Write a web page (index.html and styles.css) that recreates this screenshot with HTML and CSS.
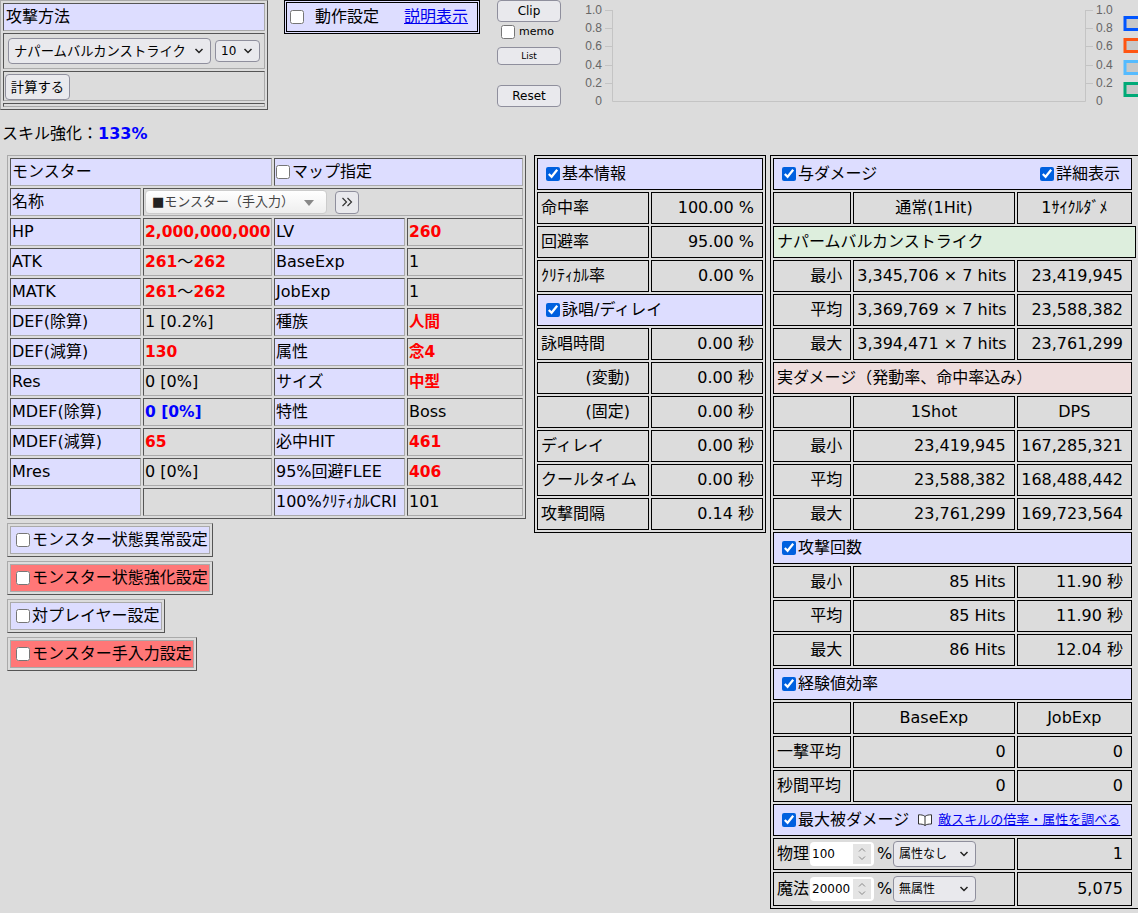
FILE: index.html
```html
<!DOCTYPE html>
<html lang="ja">

<head>
  <meta charset="UTF-8" />
  <title>ダメージ計算</title>
  <link rel="stylesheet" href="styles.css">
</head>

<body>

  <div class="top">
    <table class="outset attack">
      <tr><td class="head">攻撃方法</td></tr>
      <tr>
        <td class="select-row">
          <div class="select-flex">
            <select class="skill-select"><option>ナパームバルカンストライク</option></select>
            <select class="level-select"><option>10</option></select>
          </div>
        </td>
      </tr>
      <tr><td class="button-row"><button class="calc">計算する</button></td></tr>
      <tr><td class="empty-row"></td></tr>
    </table>

    <div class="settings">
      <input type="checkbox" />
      <span class="settings-label">動作設定</span>
      <a href="#">説明表示</a>
    </div>

    <div class="tools">
      <button class="clip">Clip</button>
      <label class="memo"><input type="checkbox" />memo</label>
      <button class="list">List</button>
      <button class="reset">Reset</button>
    </div>

    <svg class="chart" width="553" height="112" viewBox="0 0 553 112">
      <g class="axis">
        <path d="M27.5 10V101.5H500.5V10" />
        <path d="M20 10.5H27M20 28.5H27M20 46.5H27M20 65.5H27M20 83.5H27" />
        <path d="M501 10.5H508M501 28.5H508M501 46.5H508M501 65.5H508M501 83.5H508" />
      </g>
      <g class="tick" text-anchor="end">
        <text x="17" y="14">1.0</text><text x="17" y="32">0.8</text><text x="17" y="50">0.6</text>
        <text x="17" y="69">0.4</text><text x="17" y="87">0.2</text><text x="17" y="105">0</text>
      </g>
      <g class="tick">
        <text x="511" y="14">1.0</text><text x="511" y="32">0.8</text><text x="511" y="50">0.6</text>
        <text x="511" y="69">0.4</text><text x="511" y="87">0.2</text><text x="511" y="105">0</text>
      </g>
      <rect class="lg" x="540" y="17.5" width="30" height="12" stroke="#0055ff" />
      <rect class="lg" x="540" y="39.5" width="30" height="12" stroke="#ff5511" />
      <rect class="lg" x="540" y="61.5" width="30" height="12" stroke="#55bbff" />
      <rect class="lg" x="540" y="83.5" width="30" height="12" stroke="#00aa77" />
    </svg>
  </div>

  <p class="skill-up">スキル強化：<b>133%</b></p>

  <div class="main">
    <div class="monster-col">
      <table class="outset monster">
        <colgroup><col class="c1"><col class="c2"><col class="c3"><col class="c4"></colgroup>
        <tr><td class="head" colspan="2">モンスター</td><td class="head" colspan="2"><input type="checkbox" />マップ指定</td></tr>
        <tr>
          <td class="head">名称</td>
          <td colspan="3">
            <div class="picker">
              <div class="picker-box"><span class="picker-mark">■</span>モンスター（手入力）<i class="caret"></i></div>
              <button class="more">
                <svg width="12" height="10" viewBox="0 0 12 10"><path d="M1.5 1l4 4-4 4M6.5 1l4 4-4 4" /></svg>
              </button>
            </div>
          </td>
        </tr>
        <tr><td class="head">HP</td><td class="red">2,000,000,000</td><td class="head">LV</td><td class="red">260</td></tr>
        <tr><td class="head">ATK</td><td><span class="red">261</span>～<span class="red">262</span></td><td class="head">BaseExp</td><td>1</td></tr>
        <tr><td class="head">MATK</td><td><span class="red">261</span>～<span class="red">262</span></td><td class="head">JobExp</td><td>1</td></tr>
        <tr><td class="head">DEF(除算)</td><td>1 [0.2%]</td><td class="head">種族</td><td class="red">人間</td></tr>
        <tr><td class="head">DEF(減算)</td><td class="red">130</td><td class="head">属性</td><td class="red">念4</td></tr>
        <tr><td class="head">Res</td><td>0 [0%]</td><td class="head">サイズ</td><td class="red">中型</td></tr>
        <tr><td class="head">MDEF(除算)</td><td class="blue">0 [0%]</td><td class="head">特性</td><td>Boss</td></tr>
        <tr><td class="head">MDEF(減算)</td><td class="red">65</td><td class="head">必中HIT</td><td class="red">461</td></tr>
        <tr><td class="head">Mres</td><td>0 [0%]</td><td class="head">95%回避FLEE</td><td class="red">406</td></tr>
        <tr><td class="head"></td><td></td><td class="head">100%ｸﾘﾃｨｶﾙCRI</td><td>101</td></tr>
      </table>

      <div class="status"><label class="status-in"><input type="checkbox" />モンスター状態異常設定</label></div>
      <div class="status"><label class="status-in warn"><input type="checkbox" />モンスター状態強化設定</label></div>
      <div class="status"><label class="status-in"><input type="checkbox" />対プレイヤー設定</label></div>
      <div class="status"><label class="status-in warn"><input type="checkbox" />モンスター手入力設定</label></div>
    </div>

    <table class="solid info">
      <colgroup><col class="i1"><col class="i2"></colgroup>
      <tr><td class="head title" colspan="2"><input type="checkbox" checked />基本情報</td></tr>
      <tr><td>命中率</td><td class="num">100.00 %</td></tr>
      <tr><td>回避率</td><td class="num">95.00 %</td></tr>
      <tr><td>ｸﾘﾃｨｶﾙ率</td><td class="num">0.00 %</td></tr>
      <tr><td class="head title" colspan="2"><input type="checkbox" checked />詠唱/ディレイ</td></tr>
      <tr><td>詠唱時間</td><td class="num">0.00 秒</td></tr>
      <tr><td class="sub">(変動)</td><td class="num">0.00 秒</td></tr>
      <tr><td class="sub">(固定)</td><td class="num">0.00 秒</td></tr>
      <tr><td>ディレイ</td><td class="num">0.00 秒</td></tr>
      <tr><td>クールタイム</td><td class="num">0.00 秒</td></tr>
      <tr><td>攻撃間隔</td><td class="num">0.14 秒</td></tr>
    </table>

    <table class="solid damage">
      <colgroup><col class="d1"><col class="d2"><col class="d3"><col class="d4"></colgroup>
      <tr>
        <td class="head title" colspan="3">
          <div class="title-split">
            <span><input type="checkbox" checked />与ダメージ</span>
            <span><input type="checkbox" checked />詳細表示</span>
          </div>
        </td>
      </tr>
      <tr><td></td><td class="mid">通常(1Hit)</td><td class="mid">1ｻｲｸﾙﾀﾞﾒ</td></tr>
      <tr><td class="skill-name" colspan="4">ナパームバルカンストライク</td></tr>
      <tr><td class="num">最小</td><td class="num">3,345,706 × 7 hits</td><td class="num">23,419,945</td></tr>
      <tr><td class="num">平均</td><td class="num">3,369,769 × 7 hits</td><td class="num">23,588,382</td></tr>
      <tr><td class="num">最大</td><td class="num">3,394,471 × 7 hits</td><td class="num">23,761,299</td></tr>
      <tr><td class="real" colspan="3">実ダメージ（発動率、命中率込み）</td></tr>
      <tr><td></td><td class="mid">1Shot</td><td class="mid">DPS</td></tr>
      <tr><td class="num">最小</td><td class="num">23,419,945</td><td class="num">167,285,321</td></tr>
      <tr><td class="num">平均</td><td class="num">23,588,382</td><td class="num">168,488,442</td></tr>
      <tr><td class="num">最大</td><td class="num">23,761,299</td><td class="num">169,723,564</td></tr>
      <tr><td class="head title" colspan="3"><input type="checkbox" checked />攻撃回数</td></tr>
      <tr><td class="num">最小</td><td class="num">85 Hits</td><td class="num">11.90 秒</td></tr>
      <tr><td class="num">平均</td><td class="num">85 Hits</td><td class="num">11.90 秒</td></tr>
      <tr><td class="num">最大</td><td class="num">86 Hits</td><td class="num">12.04 秒</td></tr>
      <tr><td class="head title" colspan="3"><input type="checkbox" checked />経験値効率</td></tr>
      <tr><td></td><td class="mid">BaseExp</td><td class="mid">JobExp</td></tr>
      <tr><td>一撃平均</td><td class="num">0</td><td class="num">0</td></tr>
      <tr><td>秒間平均</td><td class="num">0</td><td class="num">0</td></tr>
      <tr>
        <td class="head title" colspan="3">
          <div class="title-link">
            <span><input type="checkbox" checked />最大被ダメージ</span>
            <a class="enemy-link" href="#">
              <svg class="book" width="16" height="12" viewBox="0 0 16 12">
                <path d="M8 2.5C6.5 1 4 .8 1.5.8V10c2.500 0 5 .2 6.500 1.500 1.500-1.300 4-1.500 6.500-1.500V.8C12 .8 9.500 1 8 2.500zM8 2.500v9" />
              </svg>
              敵スキルの倍率・属性を調べる
            </a>
          </div>
        </td>
      </tr>
      <tr>
        <td colspan="2">
          <div class="taken">
            物理
            <span class="pct"><input type="text" value="100" /><span class="spin"><svg width="10" height="16" viewBox="0 0 10 16"><path d="M2 5.500l3-3 3 3M2 10.500l3 3 3-3" /></svg></span></span>
            <span class="pct-mark">%</span>
            <select class="elem"><option>属性なし</option></select>
          </div>
        </td>
        <td class="num">1</td>
      </tr>
      <tr class="last-row">
        <td colspan="2">
          <div class="taken">
            魔法
            <span class="pct"><input type="text" value="20000" /><span class="spin"><svg width="10" height="16" viewBox="0 0 10 16"><path d="M2 5.500l3-3 3 3M2 10.500l3 3 3-3" /></svg></span></span>
            <span class="pct-mark">%</span>
            <select class="elem"><option>無属性</option></select>
          </div>
        </td>
        <td class="num">5,075</td>
      </tr>
    </table>
  </div>

</body>

</html>
```

FILE: styles.css
```css
:root {
  --fundo: #dcdcdc;
  --lavanda: #ddddff;
  --alerta: #ff7777;
  --controle: #e9e9ed;
  --controle-borda: #8f8f9d;
}

html, body {
  overflow: hidden;
}

body {
  margin: 0;
  height: 913px;
  background-color: var(--fundo);
  color: #000;
  font-family: "DejaVu Sans", "Noto Sans CJK JP", sans-serif;
  font-size: 16px;
  line-height: 20px;
}

table {
  border-collapse: separate;
  border-spacing: 2px;
  table-layout: fixed;
}

td {
  padding: 0 1px;
  white-space: nowrap;
  box-sizing: border-box;
}

button, select {
  border: 1px solid var(--controle-borda);
  border-radius: 4px;
  background-color: var(--controle);
  color: #000;
  font-family: inherit;
}

select {
  appearance: none;
  padding: 0 0 0 5px;
  background-image: url("data:image/svg+xml,%3Csvg xmlns='http://www.w3.org/2000/svg' width='10' height='8'%3E%3Cpath d='M1.500 2l3.500 3.500L8.500 2' fill='none' stroke='%23222' stroke-width='1.500'/%3E%3C/svg%3E");
  background-repeat: no-repeat;
  background-position: right 6px center;
}

input[type="checkbox"] {
  width: 14px;
  height: 14px;
  margin: 0 2px 0 0;
  vertical-align: -2px;
  accent-color: #0060df;
}

a {
  color: #0000ee;
}

.outset {
  border: 1px solid;
  border-color: #aaa #555 #555 #aaa;
}

.outset td {
  border: 1px solid;
  border-color: #555 #aaa #aaa #555;
}

.solid {
  border: 1px solid #000;
}

.solid td {
  border: 1px solid #000;
  height: 32px;
  padding: 0 3px;
}

.head {
  background-color: var(--lavanda);
}

.solid .title {
  padding-left: 8px;
}

.solid .num {
  text-align: right;
  padding-right: 8px;
}

.solid .sub {
  text-align: right;
  padding-right: 18px;
}

.mid {
  text-align: center;
}

.red {
  color: #ff0000;
  font-size: 15.5px;
  font-weight: bold;
}

.blue {
  color: #0000ff;
  font-size: 15.5px;
  font-weight: bold;
}

/* Barra de cima */
.top {
  display: flex;
  align-items: flex-start;
  height: 112px;
}

.attack {
  flex: none;
  width: 268px;
  height: 110px;
}

.attack .head {
  height: 28px;
  padding-left: 2px;
}

.attack .select-row {
  height: 36px;
  padding-left: 4px;
}

.select-flex {
  display: flex;
  align-items: center;
  gap: 4px;
}

.skill-select {
  width: 203px;
  height: 26px;
  font-size: 13.33px;
}

.level-select {
  width: 45px;
  height: 22px;
  font-size: 12px;
}

.button-row {
  height: 30px;
}

.calc {
  display: block;
  width: 65px;
  height: 26px;
  margin-top: 1px;
  padding: 0;
  font-size: 13.33px;
}

.attack .empty-row {
  height: 4px;
}

.settings {
  flex: none;
  display: flex;
  align-items: center;
  box-sizing: border-box;
  width: 196px;
  height: 34px;
  margin-left: 16px;
  padding-left: 3px;
  border: 3px double #000;
  background-color: var(--lavanda);
}

.settings input {
  margin: 0;
}

.settings-label {
  margin-left: 11px;
}

.settings a {
  margin-left: 25px;
}

.tools {
  flex: none;
  display: flex;
  flex-direction: column;
  width: 64px;
  margin-left: 17px;
}

.tools button {
  width: 64px;
  padding: 0;
}

.clip {
  height: 22px;
  font-size: 12px;
}

.memo {
  display: flex;
  align-items: center;
  gap: 2px;
  height: 14px;
  margin-top: 3px;
  padding-left: 4px;
  font-size: 11px;
}

.list {
  height: 18px;
  margin-top: 8px;
  font-size: 9px;
}

.reset {
  height: 22px;
  margin-top: 20px;
  font-size: 12px;
}

.chart {
  flex: none;
  margin-left: 24px;
}

.axis path {
  fill: none;
  stroke: #c4c4c4;
  stroke-width: 1;
}

.tick text {
  font-family: "Liberation Sans", sans-serif;
  font-size: 12px;
  fill: #666;
}

.lg {
  fill: #c8c8c8;
  stroke-width: 3;
}

.skill-up {
  height: 22px;
  margin: 11px 0 10px 2px;
  line-height: 22px;
}

.skill-up b {
  color: #0000ff;
}

/* Colunas principais */
.main {
  display: flex;
  align-items: flex-start;
}

.monster-col {
  flex: none;
  width: 519px;
  margin-left: 7px;
}

.monster {
  width: 519px;
}

.monster td {
  height: 28px;
}

.c1 { width: 131px; }
.c2 { width: 129px; }
.c3 { width: 131px; }
.c4 { width: 116px; }

.picker {
  display: flex;
  align-items: center;
}

.picker-box {
  position: relative;
  box-sizing: border-box;
  width: 182px;
  height: 24px;
  padding-left: 6px;
  border: 1px solid #ccc;
  border-radius: 4px;
  background: linear-gradient(#fff, #eee);
  color: #444;
  font-size: 13px;
  line-height: 22px;
}

.picker-mark {
  color: #222;
}

.caret {
  position: absolute;
  top: 9px;
  right: 12px;
  border-left: 5px solid transparent;
  border-right: 5px solid transparent;
  border-top: 6px solid #888;
}

.more {
  display: flex;
  align-items: center;
  justify-content: center;
  box-sizing: border-box;
  width: 24px;
  height: 23px;
  margin-left: 8px;
  padding: 0;
}

.more path {
  fill: none;
  stroke: #333;
  stroke-width: 1.2;
}

.status {
  width: fit-content;
  margin-top: 4px;
  padding: 2px;
  border: 1px solid;
  border-color: #aaa #555 #555 #aaa;
}

.status-in {
  display: block;
  height: 26px;
  padding: 0 1px 0 5px;
  border: 1px solid #aaa;
  background-color: var(--lavanda);
  line-height: 26px;
}

.status-in.warn {
  background-color: var(--alerta);
}

.info {
  flex: none;
  width: 232px;
  margin-left: 8px;
}

.i1 { width: 112px; }
.i2 { width: 112px; }

.damage {
  flex: none;
  width: 368px;
  margin-left: 4px;
  border-right: none;
}

.d1 { width: 78px; }
.d2 { width: 161px; }
.d3 { width: 115px; }
.d4 { width: 2px; }

.title-split {
  display: flex;
  justify-content: space-between;
  padding-right: 8px;
}

.solid .skill-name {
  background-color: #ddeedd;
}

.solid .real {
  background-color: #eedddd;
}

.title-link {
  display: flex;
  align-items: center;
  gap: 8px;
}

.enemy-link {
  display: flex;
  align-items: center;
  gap: 5px;
  font-size: 13px;
}

.book {
  fill: #fff;
  stroke: #333;
  stroke-width: 1;
}

.taken {
  display: flex;
  align-items: center;
}

.pct {
  display: flex;
  align-items: center;
  box-sizing: border-box;
  width: 64px;
  height: 24px;
  margin-left: 1px;
  border-radius: 4px;
  background-color: #fff;
}

.pct input {
  box-sizing: border-box;
  width: 43px;
  height: 22px;
  padding: 0 0 0 2px;
  border: none;
  outline: none;
  background: none;
  font-family: inherit;
  font-size: 12px;
}

.spin {
  display: flex;
  align-items: center;
  justify-content: center;
  width: 18px;
  height: 20px;
  background-color: #e4e4e4;
}

.spin path {
  fill: none;
  stroke: #888;
  stroke-width: 1;
}

.pct-mark {
  width: 17px;
  margin-left: 2px;
  text-align: center;
}

.elem {
  width: 83px;
  height: 26px;
  font-size: 12px;
}

.last-row td {
  height: 34px;
}
```
